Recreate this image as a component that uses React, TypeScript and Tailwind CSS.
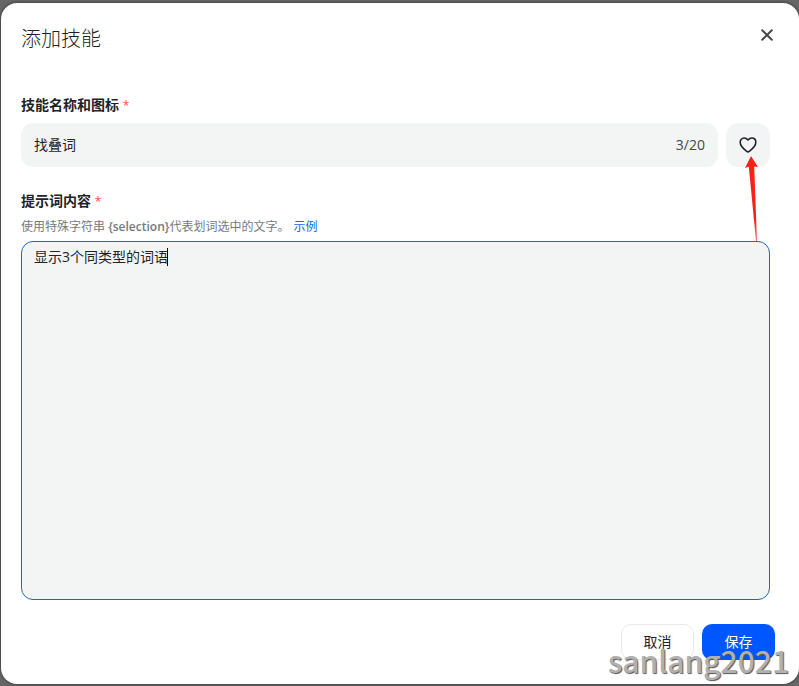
import React from 'react'
import { cx } from 'class-variance-authority'

const NAME_LIMIT = 20

// 中文用 Noto CJK，西文与数字优先 Open Sans
const FONT = 'font-["Open_Sans","Noto_Sans_CJK_SC",sans-serif]'
const FIELD = 'bg-[#f3f5f5] rounded-xl'
const ACTION = 'h-9 w-[73px] rounded-[10px] text-sm'

function FieldLabel({ htmlFor, children }: { htmlFor: string; children: React.ReactNode }) {
  return (
    <label htmlFor={htmlFor} className="block text-sm leading-5 font-bold text-[#1f2329]">
      {children} <span className="text-xs font-normal text-[#f0503c]">*</span>
    </label>
  )
}

function CloseIcon() {
  return (
    <svg width="12" height="12" viewBox="0 0 12 12" fill="none" stroke="#484848" strokeWidth="2" strokeLinecap="round">
      <path d="M1.2 1.2 10.8 10.8M10.8 1.2 1.2 10.8" />
    </svg>
  )
}

function HeartIcon() {
  return (
    <svg width="18" height="18" viewBox="0 0 18 18" fill="none" stroke="#1f2329" strokeWidth="1.6" strokeLinejoin="round">
      <path d="M9 4C7.7 2.4 6.5 2 5.2 2 2.8 2 1.2 3.9 1.2 6.3c0 3.3 3.3 6.7 6.5 9.1.8.6 1.8.6 2.6 0 3.2-2.4 6.5-5.8 6.5-9.1C16.8 3.9 15.2 2 12.8 2 11.5 2 10.3 2.4 9 4Z" />
    </svg>
  )
}

/** 指向图标按钮的红色箭头标注 */
function PointerArrow() {
  return (
    <svg
      aria-hidden="true"
      className="pointer-events-none absolute top-[33px] left-[18px] z-10"
      width="14"
      height="86"
      viewBox="0 0 14 86"
    >
      <defs>
        <linearGradient id="arrow-fade" x1="0" y1="0" x2="0" y2="1">
          <stop offset="0.75" stopColor="#fc2116" />
          <stop offset="1" stopColor="#d8424a" stopOpacity="0.75" />
        </linearGradient>
      </defs>
      <path d="M7 0 14 11 10.2 10.5 13 85H12L4.8 10.8 1 12Z" fill="url(#arrow-fade)" />
    </svg>
  )
}

export default function App() {
  const [name, setName] = React.useState('找叠词')
  const [prompt, setPrompt] = React.useState('显示3个同类型的词语')

  return (
    <div className={cx(FONT, 'flex min-h-screen bg-[#666] pt-[3px] pb-0.5 pl-px')}>
      <div
        role="dialog"
        aria-labelledby="dialog-title"
        className="relative flex flex-1 flex-col rounded-2xl bg-white px-5 pt-5 pb-6 shadow-[0_0_3px_#222]"
      >
        <header className="flex items-start justify-between">
          <h1 id="dialog-title" className="text-xl leading-8 font-light text-[#1f1f1f]">添加技能</h1>
          <button type="button" aria-label="关闭" className="grid size-6 place-items-center">
            <CloseIcon />
          </button>
        </header>

        <form className="flex flex-1 flex-col pt-10" onSubmit={(e) => e.preventDefault()}>
          <div className="flex flex-1 flex-col pr-[9px]">
            <FieldLabel htmlFor="skill-name">技能名称和图标</FieldLabel>
            <div className="mt-2 flex gap-2">
              <div className={cx(FIELD, 'flex h-11 flex-1 items-center px-[13px] text-sm text-[#1f2329]')}>
                <input
                  id="skill-name"
                  value={name}
                  maxLength={NAME_LIMIT}
                  onChange={(e) => setName(e.target.value)}
                  className="min-w-0 flex-1 bg-transparent outline-none"
                />
                <span className="text-[#44484d]">{name.length}/{NAME_LIMIT}</span>
              </div>
              <div className="relative">
                <button type="button" aria-label="选择图标" className={cx(FIELD, 'grid size-11 place-items-center')}>
                  <HeartIcon />
                </button>
                <PointerArrow />
              </div>
            </div>

            <div className="mt-6">
              <FieldLabel htmlFor="skill-prompt">提示词内容</FieldLabel>
            </div>
            <p className="mt-2 text-xs leading-4 text-[#757a80]">
              使用特殊字符串 <span className="font-semibold">{'{selection}'}</span>代表划词选中的文字。
              <a href="#example" className="ml-1 text-[#1664e0]">示例</a>
            </p>
            <div className="relative mt-1.5 flex flex-1">
              <textarea
                id="skill-prompt"
                value={prompt}
                onChange={(e) => setPrompt(e.target.value)}
                className={cx(FIELD, 'flex-1 resize-none border border-[#1c69b8] px-3 py-[5px] text-sm leading-5 text-[#1f2329] outline-none')}
              />
              <span aria-hidden="true" className="absolute top-[7px] left-[146px] h-[18px] w-px bg-black" />
            </div>
          </div>

          <footer className="mt-6 flex justify-end gap-2 pr-1">
            <button type="button" className={cx(ACTION, 'border border-[#e8eaed] bg-white text-[#1f2329]')}>取消</button>
            <button type="submit" className={cx(ACTION, 'bg-[#0057ff] text-white')}>保存</button>
          </footer>
        </form>

        <span className='pointer-events-none absolute right-[10px] bottom-1 font-["Noto_Sans_CJK_SC",sans-serif] text-[30px] leading-10 font-medium text-[#b0b0b0] [text-shadow:1px_1px_1px_#555]'>
          sanlang2021
        </span>
      </div>
    </div>
  )
}
